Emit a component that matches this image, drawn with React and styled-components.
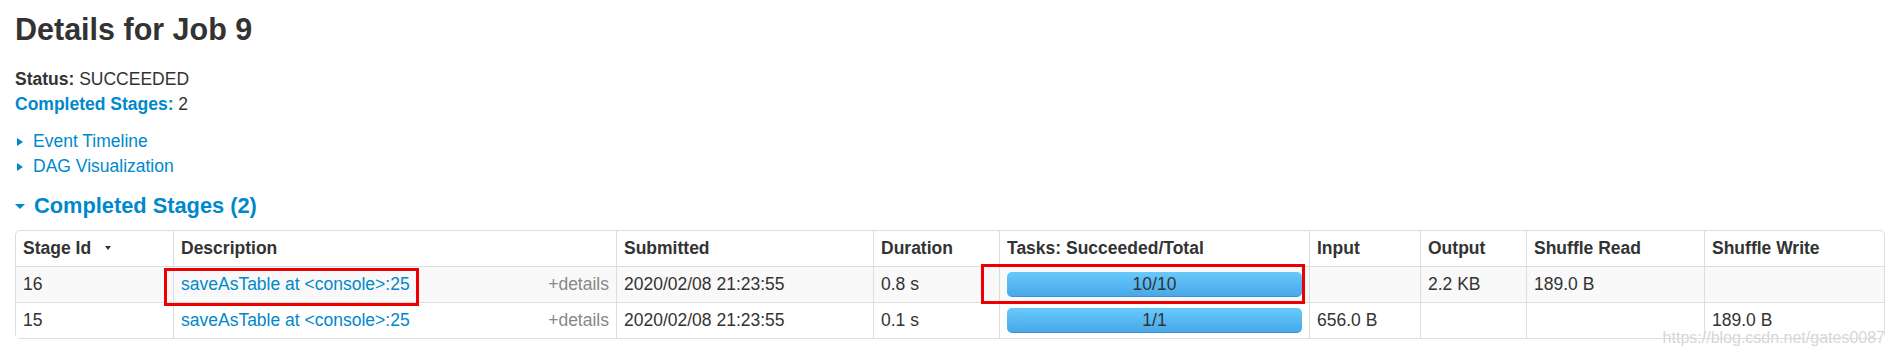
import React from 'react'
import styled, { createGlobalStyle } from 'styled-components'

const Global = createGlobalStyle`
    body {
        margin: 0;
        background: #fff;
        color: #333;
        font-family: "Liberation Sans", Arial, sans-serif;
        font-size: 17.5px;
        line-height: 25px;
    }
`;

const Page = styled.div`
    position: relative;
    padding: 0 9px 0 15px;
    height: 356px;
    overflow: hidden;
`;
const Title = styled.h3`
    margin: 10px 0 0;
    font-size: 30.5px;
    line-height: 38px;
    font-weight: bold;
    color: #333;
`;
const Summary = styled.ul`
    list-style: none;
    margin: 19px 0 0;
    padding: 0;
`;
const Label = styled.strong`
    color: ${p => (p.link ? '#0088cc' : '#333')};
`;
const Toggles = styled.div`
    margin-top: 12px;
`;
const Toggle = styled.div`
    display: flex;
    align-items: center;
    color: #0088cc;
`;
const ArrowClosed = styled.span`
    width: 0;
    height: 0;
    margin: 0 10px 0 2px;
    border-left: 6.5px solid #0088cc;
    border-top: 4.5px solid transparent;
    border-bottom: 4.5px solid transparent;
`;
const Heading = styled.h4`
    display: flex;
    align-items: center;
    margin: 13px 0 0;
    font-size: 21.8px;
    line-height: 27px;
    font-weight: bold;
    color: #0088cc;
`;
const ArrowOpen = styled.span`
    width: 0;
    height: 0;
    margin: 2px 9px 0 0;
    border-top: 5px solid #0088cc;
    border-left: 5px solid transparent;
    border-right: 5px solid transparent;
`;
const TableWrap = styled.div`
    position: relative;
    margin-top: 11px;
`;
const Table = styled.table`
    width: 1870px;
    table-layout: fixed;
    border-collapse: separate;
    border-spacing: 0;
    border: 1px solid #ddd;
    border-radius: 5px;
`;
const Th = styled.th`
    box-sizing: border-box;
    width: ${p => p.w}px;
    padding: 5px 7px;
    text-align: left;
    font-weight: bold;
    color: #333;
    border-left: ${p => (p.first ? 'none' : '1px solid #ddd')};
    white-space: nowrap;
`;
const Row = styled.tr`
    background: ${p => (p.striped ? '#f9f9f9' : '#fff')};
`;
const Td = styled.td`
    box-sizing: border-box;
    padding: 5px 7px;
    height: 35px;
    border-top: 1px solid #ddd;
    border-left: ${p => (p.first ? 'none' : '1px solid #ddd')};
    white-space: nowrap;
    vertical-align: top;
`;
const SortArrow = styled.span`
    display: inline-block;
    margin-left: 14px;
    vertical-align: 4px;
    border-top: 4.5px solid #333;
    border-left: 3.5px solid transparent;
    border-right: 3.5px solid transparent;
`;
const Link = styled.a`
    color: #0088cc;
    text-decoration: none;
`;
const Details = styled.span`
    float: right;
    color: #888;
`;
const Progress = styled.div`
    position: relative;
    height: 25px;
    border-radius: 5px;
    overflow: hidden;
    background: linear-gradient(#f5f5f5, #f9f9f9);
`;
const Bar = styled.div`
    height: 100%;
    background: linear-gradient(#67c9fb, #47a7e8);
    box-shadow: inset 0 -1px 0 rgba(0, 0, 0, 0.12);
`;
const BarText = styled.span`
    position: absolute;
    inset: 0;
    text-align: center;
    line-height: 25px;
    color: #333;
`;
const Mark = styled.div`
    position: absolute;
    left: ${p => p.x}px;
    top: ${p => p.y}px;
    width: ${p => p.w}px;
    height: ${p => p.h}px;
    box-sizing: border-box;
    border: 3px solid #ee0000;
    pointer-events: none;
`;
const Watermark = styled.div`
    position: absolute;
    right: 8px;
    top: 329px;
    font-size: 16px;
    line-height: 18px;
    color: rgba(185, 185, 185, 0.6);
    text-shadow: 0 0 1px #fff;
`;

const columns = [
    { name: 'Stage Id', w: 157, sort: true },
    { name: 'Description', w: 443 },
    { name: 'Submitted', w: 257 },
    { name: 'Duration', w: 126 },
    { name: 'Tasks: Succeeded/Total', w: 310 },
    { name: 'Input', w: 111 },
    { name: 'Output', w: 106 },
    { name: 'Shuffle Read', w: 178 },
    { name: 'Shuffle Write', w: 180 },
]

const stages = [
    { id: 16, submitted: '2020/02/08 21:23:55', duration: '0.8 s', done: 10, total: 10, input: '', output: '2.2 KB', read: '189.0 B', write: '' },
    { id: 15, submitted: '2020/02/08 21:23:55', duration: '0.1 s', done: 1, total: 1, input: '656.0 B', output: '', read: '', write: '189.0 B' },
]

const App = () => {
    return (
        <Page>
            <Global />
            <Title>Details for Job 9</Title>
            <Summary>
                <li><Label>Status:</Label> SUCCEEDED</li>
                <li><Label link>Completed Stages:</Label> 2</li>
            </Summary>
            <Toggles>
                <Toggle><ArrowClosed />Event Timeline</Toggle>
                <Toggle><ArrowClosed />DAG Visualization</Toggle>
            </Toggles>
            <Heading><ArrowOpen />Completed Stages (2)</Heading>
            <TableWrap>
                <Table>
                    <thead>
                        <tr>
                            {columns.map((c, i) => (
                                <Th key={c.name} w={c.w} first={i === 0}>
                                    {c.name}
                                    {c.sort && <SortArrow />}
                                </Th>
                            ))}
                        </tr>
                    </thead>
                    <tbody>
                        {stages.map((s, i) => (
                            <Row key={s.id} striped={i === 0}>
                                <Td first>{s.id}</Td>
                                <Td>
                                    <Link href="#">saveAsTable at &lt;console&gt;:25</Link>
                                    <Details>+details</Details>
                                </Td>
                                <Td>{s.submitted}</Td>
                                <Td>{s.duration}</Td>
                                <Td>
                                    <Progress>
                                        <Bar style={{ width: `${(s.done / s.total) * 100}%` }} />
                                        <BarText>{s.done}/{s.total}</BarText>
                                    </Progress>
                                </Td>
                                <Td>{s.input}</Td>
                                <Td>{s.output}</Td>
                                <Td>{s.read}</Td>
                                <Td>{s.write}</Td>
                            </Row>
                        ))}
                    </tbody>
                </Table>
                <Mark x={149} y={38} w={255} h={38} />
                <Mark x={966} y={34} w={324} h={40} />
            </TableWrap>
            <Watermark>https://blog.csdn.net/gates0087</Watermark>
        </Page>
    )
}

export default App
